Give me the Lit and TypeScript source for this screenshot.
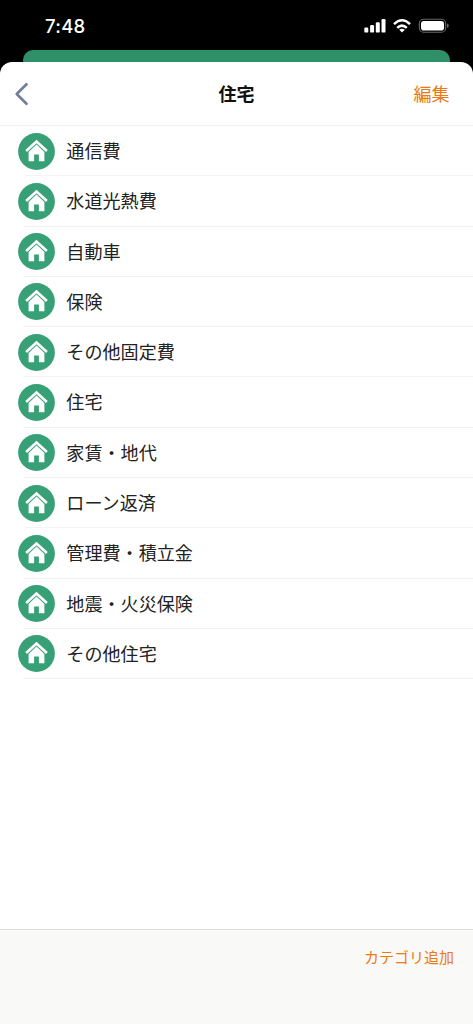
import { LitElement, html, css } from "lit";
import { customElement, property } from "lit/decorators.js";

@customElement("status-bar")
class StatusBar extends LitElement {
  static styles = css`
    :host { display: flex; height: 50px; box-sizing: border-box; padding: 0 24px 0 45px; justify-content: space-between; color: #fff; }
    .time { font: 500 18.5px/26px Inter, "Liberation Sans", sans-serif; padding-top: 13px; letter-spacing: 0.3px; }
    svg { display: block; margin-top: 16px; }
  `;
  render() {
    return html`
      <div class="time">7:48</div>
      <svg width="85" height="20" viewBox="364 16 85 20" fill="#fff">
        <rect x="364.3" y="27.6" width="4" height="5" rx="1.2" />
        <rect x="370.1" y="25" width="4" height="7.6" rx="1.2" />
        <rect x="375.8" y="22.2" width="4" height="10.4" rx="1.2" />
        <rect x="381.5" y="19" width="4" height="13.6" rx="1.2" />
        <g fill="none" stroke="#fff" stroke-width="2.5">
          <path d="M394 24.1 Q402 16.3 410 24.1" />
          <path d="M397.2 27.9 Q402 23.4 406.8 27.9" />
        </g>
        <path d="M399.2 29.8 Q402 27.6 404.8 29.8 L402 32.6Z" />
        <rect x="419.3" y="19.3" width="26.4" height="12.9" rx="4.2" fill="none" stroke="#66666a" stroke-width="1.1" />
        <rect x="421" y="21" width="23" height="9.6" rx="2.8" />
        <path d="M447 23.6 Q448.8 24.2 448.8 25.8 Q448.8 27.4 447 28Z" fill="#66666a" />
      </svg>
    `;
  }
}

@customElement("category-row")
class CategoryRow extends LitElement {
  @property() label = "";
  static styles = css`
    :host { display: flex; height: 50.3px; box-sizing: border-box; padding-left: 18px; }
    .icon { flex: none; width: 37px; height: 37px; margin-top: 6.5px; }
    .label { flex: 1; margin-left: 11.3px; font-size: 18.1px; line-height: 48.6px; color: #222; white-space: nowrap; }
  `;
  render() {
    return html`
      <svg class="icon" viewBox="0 0 37 37">
        <circle cx="18.5" cy="18.5" r="18.4" fill="#38a077" />
        <path d="M8.1 18 L18.5 8.5 L28.9 18" fill="none" stroke="#fff" stroke-width="2.6" />
        <path d="M10.6 18.9 L18.5 11.6 L26.4 18.9 V28.2 H20.9 V21.6 H16.1 V28.2 H10.6Z" fill="#fff" />
      </svg>
      <span class="label">${this.label}</span>
    `;
  }
}

@customElement("app-root")
class AppRoot extends LitElement {
  static styles = css`
    :host { display: flex; flex-direction: column; width: 473px; height: 1024px; overflow: hidden; background: #000; font-family: "Noto Sans CJK JP", sans-serif; }
    .behind { flex: none; height: 12px; margin: 0 23px; border-radius: 10px 10px 0 0; background: #2f8f69; }
    status-bar { flex: none; }
    .sheet { flex: 1; min-height: 0; display: flex; flex-direction: column; background: #fff; border-radius: 12px 12px 0 0; overflow: hidden; }
    .head { flex: none; display: grid; grid-template-columns: 1fr auto 1fr; align-items: center; height: 64px; box-sizing: border-box; border-bottom: 1px solid #f3f3f3; padding: 0 14px; }
    .back { display: block; }
    .title { font-size: 18px; font-weight: 700; line-height: 26px; color: #111; padding-bottom: 2px; }
    .edit { justify-self: end; font-size: 18px; line-height: 26px; color: #ec7a13; padding: 0 9.4px 2px 0; }
    .list { flex: 1; display: flex; flex-direction: column; }
    .item { background: linear-gradient(#f3f3f3, #f3f3f3) 23px 100% / 100% 1px no-repeat; }
    .foot { flex: none; height: 95px; box-sizing: border-box; border-top: 1px solid #e0e0e0; background: #f9f9f8; padding: 15px 19px 0 0; text-align: right; font-size: 15px; line-height: 24px; color: #ec7a13; }
  `;
  items = ["通信費", "水道光熱費", "自動車", "保険", "その他固定費", "住宅", "家賃・地代", "ローン返済", "管理費・積立金", "地震・火災保険", "その他住宅"];
  render() {
    return html`
      <status-bar></status-bar>
      <div class="behind"></div>
      <div class="sheet">
        <div class="head">
          <svg class="back" width="16" height="24" viewBox="0 0 16 24" fill="none" stroke="#718096" stroke-width="2.7" stroke-linecap="round" stroke-linejoin="round">
            <path d="M12.5 2.3 L2.7 12 L12.5 21.7" />
          </svg>
          <span class="title">住宅</span>
          <span class="edit">編集</span>
        </div>
        <div class="list">
          ${this.items.map((t) => html`<category-row class="item" .label=${t}></category-row>`)}
        </div>
        <div class="foot">カテゴリ追加</div>
      </div>
    `;
  }
}
